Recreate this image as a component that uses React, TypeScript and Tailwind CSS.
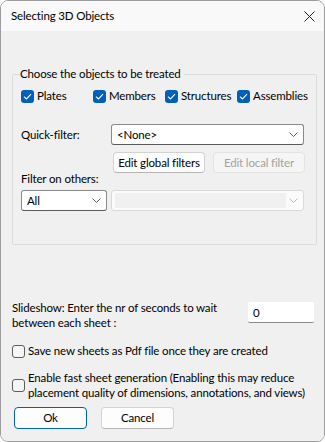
import React from 'react'

const font = { fontFamily: 'Lato, "Noto Sans", sans-serif' }

function Chevron({ disabled }: { disabled?: boolean }) {
  return (
    <svg width="9" height="5" viewBox="0 0 9 5" className="shrink-0">
      <polyline
        points="0.5,0.5 4.5,4.5 8.5,0.5"
        fill="none"
        stroke={disabled ? '#b8b8b8' : '#5f5f5f'}
        strokeWidth="1"
      />
    </svg>
  )
}

function Check({ checked }: { checked: boolean }) {
  if (!checked)
    return <span className="w-[13px] h-[13px] shrink-0 rounded-[3px] border border-[#5c5c5c] bg-[#f6f6f6]" />
  return (
    <span className="w-[13px] h-[13px] shrink-0 rounded-[3px] bg-[#005fb8] flex items-center justify-center">
      <svg width="9" height="7" viewBox="0 0 9 7">
        <polyline points="1,3.6 3.4,6 8,1.2" fill="none" stroke="#fff" strokeWidth="1.1" />
      </svg>
    </span>
  )
}

function Combo({ value, className, disabled }: { value?: string; className: string; disabled?: boolean }) {
  return (
    <div
      className={
        'h-[21px] flex items-center justify-between rounded-[3px] border pr-[5px] ' +
        (disabled ? 'border-[#d9d9d9] bg-[#fbfbfb] pl-[3px] ' : 'border-[#8a8a8a] border-b-[#5a5a5a] bg-white pl-[5px] ') +
        className
      }
    >
      {disabled ? <span className="h-[15px] w-[171px] bg-[#f0f0f0]" /> : <span>{value}</span>}
      <Chevron disabled={disabled} />
    </div>
  )
}

function Btn({ label, disabled, primary, className }: { label: string; disabled?: boolean; primary?: boolean; className?: string }) {
  let cls = 'border-[#d3d3d3] border-b-[#b5b5b5] bg-[#fdfdfd] text-black'
  if (disabled) cls = 'border-[#e3e3e3] bg-[#f5f5f5] text-[#a2a2a2]'
  if (primary) cls = 'border-[#005fb8] bg-[#fdfdfd] text-black'
  return (
    <div className={'h-[21px] flex items-center justify-center whitespace-nowrap rounded-[4px] border ' + cls + ' ' + (className ?? '')}>
      {label}
    </div>
  )
}

export default function App() {
  return (
    <div className="w-[325px] h-[442px] bg-white" style={font}>
      <div className="w-[325px] h-[442px] flex flex-col rounded-[8px] border border-[#9c9c9c] overflow-hidden text-[11.5px] tracking-[-0.15px] text-black leading-[16px]">
        <div className="h-[30px] shrink-0 bg-[#f9f9f9] flex items-center justify-between pl-[10px] pr-[9px]">
          <span>Selecting 3D Objects</span>
          <svg width="11" height="11" viewBox="0 0 11 11">
            <path d="M0.5 0.5 L10.5 10.5 M10.5 0.5 L0.5 10.5" stroke="#1b1b1b" strokeWidth="1" />
          </svg>
        </div>

        <div className="flex-1 bg-[#f0f0f0] pl-[11px] pr-[10px] pt-[35px]">
          <fieldset className="h-[179px] border border-[#dcdcdc] rounded-[2px] pl-[8px] pr-[8px]">
            <legend className="-ml-[1px] pr-[3px] leading-[16px]">Choose the objects to be treated</legend>

            <div className="mt-[6px] grid grid-cols-[72px_72px_72px_1fr] h-[16px]">
              {['Plates', 'Members', 'Structures', 'Assemblies'].map((l) => (
                <div key={l} className="flex items-center gap-[3px] whitespace-nowrap">
                  <Check checked />
                  <span>{l}</span>
                </div>
              ))}
            </div>

            <div className="mt-[20px] flex items-center">
              <span className="w-[90px]">Quick-filter:</span>
              <Combo value="<None>" className="w-[193px]" />
            </div>

            <div className="mt-[7px] ml-[92px] flex gap-[8px]">
              <Btn label="Edit global filters" className="w-[92px]" />
              <Btn label="Edit local filter" disabled className="w-[92px]" />
            </div>

            <div className="-mt-[1px] leading-[14px]">Filter on others:</div>

            <div className="mt-[4px] flex gap-[4px]">
              <Combo value="All" className="w-[86px]" />
              <Combo disabled className="w-[193px]" />
            </div>
          </fieldset>

          <div className="mt-[55px] flex justify-between items-start leading-[15px]">
            <span>
              Slideshow: Enter the nr of seconds to wait
              <br />
              between each sheet :
            </span>
            <div className="mt-[2px] w-[66px] h-[21px] bg-white border-b border-b-[#8a8a8a] rounded-[2px] flex items-center pl-[5px]">
              0
            </div>
          </div>

          <div className="mt-[13px] flex items-center gap-[3px] leading-[16px]">
            <Check checked={false} />
            <span>Save new sheets as Pdf file once they are created</span>
          </div>

          <div className="mt-[11px] flex items-center gap-[3px] leading-[15px]">
            <Check checked={false} />
            <span className="whitespace-nowrap">
              Enable fast sheet generation (Enabling this may reduce
              <br />
              placement quality of dimensions, annotations, and views)
            </span>
          </div>

          <div className="mt-[7px] ml-[2px] flex gap-[14px]">
            <Btn label="Ok" primary className="w-[73px] h-[22px]" />
            <Btn label="Cancel" className="w-[73px] h-[22px]" />
          </div>
        </div>
      </div>
    </div>
  )
}
